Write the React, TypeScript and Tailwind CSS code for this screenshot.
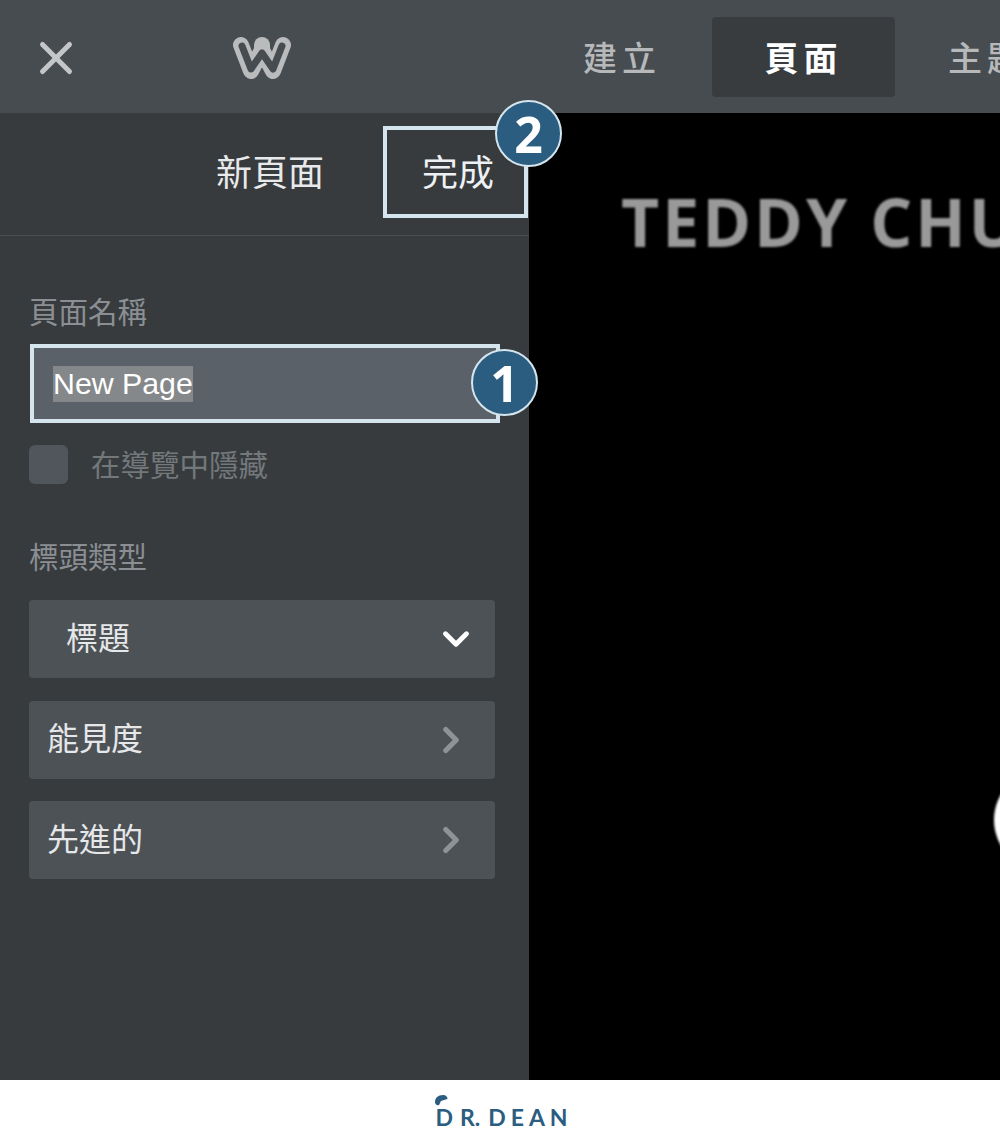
import { ChevronDown, ChevronRight, X } from "lucide-react";

const cjk = "font-['Noto_Sans_CJK_TC','Noto_Sans',sans-serif]";

function Badge({ n, className }: { n: string; className: string }) {
  return (
    <div className={`absolute z-20 w-[67px] h-[67px] rounded-full bg-[#2b5d80] border-2 border-[#d5e5ee] flex items-center justify-center text-white text-[50px] font-bold leading-none font-['Noto_Sans',sans-serif] ${className}`}>
      {n}
    </div>
  );
}

function Row({ label }: { label: string }) {
  return (
    <div className="h-[78px] w-[466px] rounded bg-[#4d5257] flex items-center justify-between pl-[18px] pr-[23px]">
      <span className="text-[32px] leading-[44px] pb-[7px] text-[#e6e7e8]">{label}</span>
      <ChevronRight size={42} strokeWidth={3} className="text-[#909396]" />
    </div>
  );
}

export default function App() {
  return (
    <div className={`w-[1000px] h-[1143px] overflow-hidden flex flex-col bg-white ${cjk}`}>
      {/* top bar */}
      <header className="h-[113px] shrink-0 flex items-center overflow-hidden bg-[#474c50]">
        <div className="w-[112px] shrink-0 flex justify-center pt-[3px]">
          <X size={54} strokeWidth={2.2} className="text-[#c4c6c8]" />
        </div>
        <div className="w-[300px] shrink-0 flex justify-center pt-[4px]">
          <svg width="60" height="45" viewBox="0 0 60 45" fill="none" strokeLinecap="round" strokeLinejoin="round">
            <path d="M9 9 L19 35 L30 14 L41 35 L51 9" stroke="#b9bbbd" strokeWidth="16" />
            <path d="M30 9 L30 24" stroke="#b9bbbd" strokeWidth="16" />
            <path d="M10 10 L19 33 L30 17 L41 33 L50 10" stroke="#474c50" strokeWidth="7" />
          </svg>
        </div>
        <nav className="flex items-center text-[34px] font-medium tracking-[5px]">
          <div className="w-[300px] shrink-0 flex justify-end pr-[51px] text-[#b6b8ba]">建立</div>
          <div className="w-[183px] h-[80px] shrink-0 rounded bg-[#383c3f] flex items-center justify-center text-white font-bold">頁面</div>
          <div className="pl-[53px] whitespace-nowrap text-[#b6b8ba]">主題</div>
        </nav>
      </header>

      <div className="flex-1 flex min-h-0">
        {/* sidebar */}
        <aside className="relative z-10 w-[529px] shrink-0 bg-[#373b3e]">
          <div className="relative h-[123px] border-b border-[#4a4f52] flex justify-end pt-[13px]">
            <div className="text-[36px] text-[#e8e9ea] leading-[88px] mr-[59px]">新頁面</div>
            <div className="w-[145px] h-[92px] mr-[1px] border-[4px] border-[#d5e5ee] flex items-center justify-center pl-[5px] pb-[5px] text-[36px] text-[#eef1f3]">完成</div>
            <Badge n="2" className="left-[495px] -top-[13px]" />
          </div>

          <div className="relative pl-[29px] pt-[56px]">
            <div className="text-[29.5px] leading-[36px] text-[#8b8f93]">頁面名稱</div>
            <div className="mt-[16px] ml-[1px] w-[470px] h-[79px] border-[4px] border-[#d5e5ee] bg-[#5a6168] flex items-center pl-[19px]">
              <span className="bg-[#85888b] text-white text-[30.3px] leading-[36px] font-['Liberation_Sans',sans-serif]">New Page</span>
            </div>
            <Badge n="1" className="left-[471px] top-[113px]" />

            <div className="mt-[22px] flex items-center gap-[23px]">
              <div className="w-[39px] h-[39px] rounded-md bg-[#50565c]" />
              <span className="text-[29.5px] leading-[37px] pb-[2px] text-[#73787b]">在導覽中隱藏</span>
            </div>

            <div className="mt-[53px] text-[29.5px] leading-[36px] text-[#8b8f93]">標頭類型</div>

            <div className="mt-[27px] flex flex-col gap-[22.5px]">
              <div className="h-[78px] w-[466px] rounded bg-[#4d5257] flex items-center justify-between pl-[37px] pr-[18px]">
                <span className="text-[32px] leading-[44px] pb-[7px] text-[#e6e7e8]">標題</span>
                <ChevronDown size={42} strokeWidth={2.8} className="text-white" />
              </div>
              <Row label="能見度" />
              <Row label="先進的" />
            </div>
          </div>
        </aside>

        {/* preview */}
        <main className="relative flex-1 bg-black overflow-hidden pl-[92px] pt-[64px]">
          <div className="text-[66px] leading-[88px] font-bold tracking-[3px] whitespace-nowrap text-[#999999] blur-[1px] font-['Open_Sans',sans-serif]">TEDDY CHU</div>
          <div className="absolute left-[465px] top-[657px] w-[100px] h-[100px] rounded-full bg-white blur-[1px]" />
        </main>
      </div>

      {/* footer */}
      <footer className="h-[63px] shrink-0 bg-white flex justify-center pt-[21px] pl-[8px]">
        <div className="relative flex text-[23px] leading-[32px] font-bold text-[#2b5d80] font-['Lato',sans-serif]">
          <svg className="absolute left-0 -top-[6px]" width="14" height="12" viewBox="0 0 14 12" fill="#2b5d80">
            <path d="M0 7 C0 3 3 0 8 0 C11 0 12.5 2 12.5 4 C10 5 8 5 6 6 C5 7 5 9 4 10 C2 11 0 9 0 7 Z" />
          </svg>
          <span className="tracking-[7px]">D</span>
          <span>R.</span>
          <span className="ml-[8px] tracking-[5px]">DEAN</span>
        </div>
      </footer>
    </div>
  );
}
